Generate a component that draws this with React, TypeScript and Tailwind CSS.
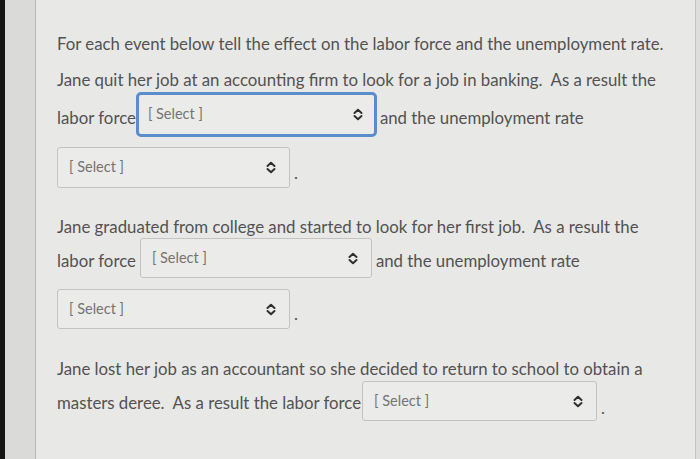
import React from 'react';

const font = { fontFamily: 'Lato, "Open Sans", sans-serif' };

const Chevrons = () => (
  <svg width="10" height="13" viewBox="0 0 10 13" fill="none" stroke="#2f2f2f" strokeWidth="2" strokeLinecap="round" strokeLinejoin="round">
    <path d="M1.5 5 L5 1.8 L8.5 5" />
    <path d="M1.5 8 L5 11.2 L8.5 8" />
  </svg>
);

const Select = ({ w, h, focused = false }: { w: number; h: number; focused?: boolean }) => (
  <div
    className={
      focused
        ? 'flex shrink-0 items-start justify-between rounded-[5px] border-[3px] border-[#5b8dcc] bg-[#ebebe9] pl-[9px] pr-[11px] pt-[11px]'
        : 'flex shrink-0 items-start justify-between rounded-[3px] border border-[#c3c3c1] bg-[#ebebe9] pl-[11px] pr-[13px] pt-[11px]'
    }
    style={{ width: w, height: h }}
  >
    <span className="text-[14.5px] leading-[16px] text-[#747474]">[ Select ]</span>
    <span className="mt-[2px]">
      <Chevrons />
    </span>
  </div>
);

export default function App() {
  return (
    <div className="flex h-[459px] w-[700px] overflow-hidden bg-[#dcdcda]" style={font}>
      <div className="w-[5px] shrink-0 bg-[#151515]" />
      <div className="w-[30px] shrink-0 bg-[#dadad8]" />
      <div className="w-px shrink-0 bg-[#b9b9b7]" />
      <div className="flex-1 border-r border-[#c4c4c2] bg-[#e8e8e6] pl-[21px] text-[16.8px] text-[#525252]">
        <p className="mt-[33px] h-[22px] whitespace-nowrap leading-[22px]">
          For each event below tell the effect on the labor force and the unemployment rate.
        </p>
        <p className="mt-[14px] h-[22px] whitespace-nowrap leading-[22px]">
          Jane quit her job at an accounting firm to look for a job in banking.&nbsp; As a result the
        </p>
        <div className="mt-px flex items-center">
          <span className="pt-[7px] leading-[22px]">labor force</span>
          <Select w={241} h={45} focused />
          <span className="ml-[3px] pt-[6px] leading-[22px]">and the unemployment rate</span>
        </div>
        <div className="mt-[10px] flex items-end">
          <Select w={233} h={41} />
          <span className="mb-[4px] ml-[4px] leading-[22px]">.</span>
        </div>

        <p className="mt-[28px] h-[22px] whitespace-nowrap leading-[22px]">
          Jane graduated from college and started to look for her first job.&nbsp; As a result the
        </p>
        <div className="flex items-center">
          <span className="pt-[6px] leading-[22px]">labor force</span>
          <span className="ml-[4px]">
            <Select w={232} h={40} />
          </span>
          <span className="ml-[4px] pt-[6px] leading-[22px]">and the unemployment rate</span>
        </div>
        <div className="mt-[11px] flex items-end">
          <Select w={233} h={40} />
          <span className="mb-[4px] ml-[4px] leading-[22px]">.</span>
        </div>

        <p className="mt-[29px] h-[22px] whitespace-nowrap leading-[22px]">
          Jane lost her job as an accountant so she decided to return to school to obtain a
        </p>
        <div className="mt-px flex items-center">
          <span className="pt-[4px] leading-[22px]">masters deree.&nbsp; As a result the labor force</span>
          <span className="ml-[1px]">
            <Select w={235} h={40} />
          </span>
          <span className="ml-[4px] pt-[14px] leading-[22px]">.</span>
        </div>
      </div>
      <div className="w-[4px] shrink-0 bg-[#dededc]" />
    </div>
  );
}
